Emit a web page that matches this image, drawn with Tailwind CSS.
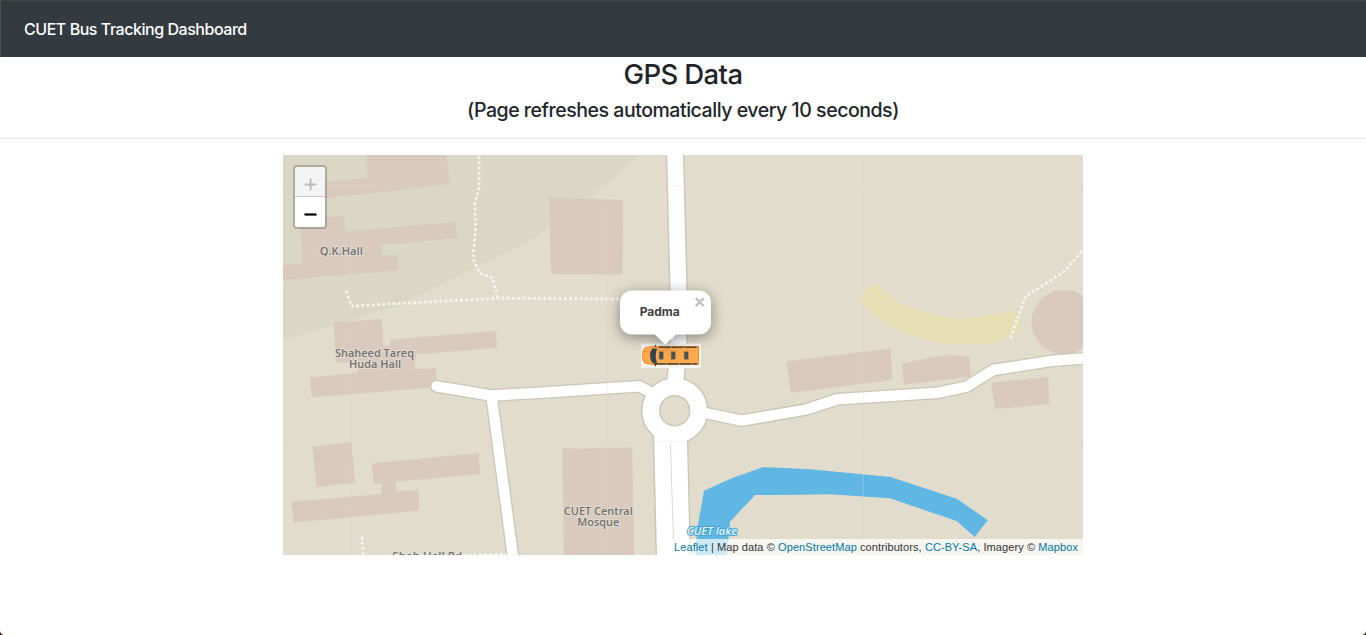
<!DOCTYPE html>
<html lang="en">
<head>
<meta charset="utf-8">
<title>CUET Bus Tracking Dashboard</title>
<script src="https://cdn.jsdelivr.net/npm/@tailwindcss/browser@4"></script>
</head>
<body class="relative h-[635px] overflow-hidden bg-white font-['Inter',sans-serif] text-[#212529]">
<nav class="flex h-[57px] items-center border-t border-l border-t-[#454545] border-l-[#4b5256] bg-[#333a40] pl-[23px]">
  <a class="text-base font-[450] tracking-[-0.46px] whitespace-nowrap text-white" href="#">CUET Bus Tracking Dashboard</a>
</nav>
<header class="flex flex-col items-center border-b border-[#e5e5e5] pb-4">
  <h2 class="h-[34px] text-[27.5px] leading-[34px] font-medium tracking-[-0.6px] whitespace-nowrap">GPS Data</h2>
  <h5 class="mt-[7px] h-6 text-[19.5px] leading-6 font-medium tracking-[-0.46px] whitespace-nowrap">(Page refreshes automatically every 10 seconds)</h5>
</header>
<main class="relative mx-auto mt-4 h-[400px] w-[800px] overflow-hidden bg-[#e1dccb]">
  <svg class="block h-[400px] w-[800px]" viewBox="283 155 800 400">
    <path fill="#dad8c4" d="M283 155H640L618 175L590 197L543 231L528 242L476 267L400 305L333 326L283 340Z"/>
    <g fill="#dacabd" stroke="#d5c5b8" stroke-width=".4">
      <path d="M367 154H446L449 184L326 198L300 200V184L326 182L368 178Z"/>
      <path d="M300 218L343.700 216.300L345 232L455.700 222.300L457 237.500L380.700 245L381.700 256L396.700 255L398 269.700L282 280V265.300L303.300 263.700Z"/>
      <path d="M334 323L381.700 319.300L383.300 346.300L391 345.700L390.700 340L495.700 331.300L496.700 347.500L415.700 354L414 369.300L435.700 368.300L437 387L312 397L310.300 377.700L358 373.300V361L337 362.700Z"/>
      <path d="M312.700 447.300L351 442.300L354.700 482.300L317 486.700Z"/>
      <path d="M372.300 463.700L478.300 453.300L480 473.700L395.700 481.300L396 491.700L417.700 490L419 510.300L294 522.300L291.700 502.300L382 494.300V483.300H374Z"/>
      <path d="M549.700 198L623 200.300L622 274.300L551.300 273.700Z"/>
      <path d="M562.700 449L631.700 448L634 556H564Z"/>
      <path d="M787 361.500L890.300 349L892 379.700L791 392.500Z"/>
      <path d="M902.700 363.700L931.700 357.700L950 355L969 357L970 376.300L904.300 384.300Z"/>
      <path d="M991.700 383L1047.700 377.300L1049 403.700L995.300 408.700Z"/>
      <circle cx="1063.700" cy="322" r="31.800"/>
    </g>
    <path fill="#e7deb4" d="M874 282.700L898.300 302.700L926.700 313.300L958.300 319.300L1017.300 310.700L1021.300 330L995 342.700L961.700 344.700L930 341L903.300 332.700L878.300 318.300L858 299.300Z"/>
    <path fill="#60b7e3" d="M704 490.700L731.700 478.300L762.700 467.300L780 467.700L810 469.300L890.700 477L957.300 499L987.700 520.300L974.700 537L956.700 521L890 498.300L830 494.300L780 495H755L730 521.700L726.700 556H695.700L696.700 531.700Z"/>
    <!-- footpaths -->
    <g fill="none" stroke="#f5f3ec" stroke-width="3.300" stroke-linecap="round" stroke-dasharray="0 5.200">
      <path d="M479 157.500V188L474.700 203.300L475.700 226.700L473 258.300L479.700 273.300L492.300 277.700L498 297.700"/>
      <path d="M346.700 292.300L351.300 306L498 298.200L620 299"/>
      <path d="M1011 336.700L1025.300 296.700L1063.300 272.300L1083 250"/>
      <path d="M362 538L363.500 556"/>
      <path d="M464.700 555L508 554"/>
    </g>
    <!-- road casing -->
    <g fill="none" stroke="#cbc6b5" stroke-linejoin="round">
      <g stroke-width="13" stroke-linecap="round">
        <path d="M436.500 386.300L491.300 395.500L540 392.700L639.300 386.300L652 393"/>
        <path d="M491.500 396L513 557"/>
        <path d="M703 412.500L741.700 420.700L780 414L806 409.500L837.700 399.300L938.300 392.700L966.700 386.700L993.300 370L1053.300 360.700L1090 358"/>
      </g>
      <path stroke-width="18.600" d="M675 150L678.500 290L678.500 345L675.500 380V390"/>
      <circle cx="674.700" cy="410.700" r="24" stroke-width="19.600"/>
    </g>
    <path fill="#cbc6b5" d="M652.500 430L655.500 556H691L688 430Z"/>
    <!-- road surface -->
    <g fill="none" stroke="#fff" stroke-linejoin="round">
      <g stroke-width="10.400" stroke-linecap="round">
        <path d="M436.500 386.300L491.300 395.500L540 392.700L639.300 386.300L652 393"/>
        <path d="M491.500 396L513 557"/>
        <path d="M703 412.500L741.700 420.700L780 414L806 409.500L837.700 399.300L938.300 392.700L966.700 386.700L993.300 370L1053.300 360.700L1090 358"/>
      </g>
      <path stroke-width="15.800" d="M675 150L678.500 290L678.500 345L675.500 380V390"/>
      <circle cx="674.700" cy="410.700" r="24" stroke-width="16.600"/>
    </g>
    <path fill="#fff" d="M654 430L657 556H689.700L686.700 430Z"/>
    <path stroke="#dedbd0" d="M670.300 443L674 555"/>
    <!-- tile seams -->
    <path stroke="#d6dccf" stroke-opacity=".3" d="M351.500 155V555M607.500 155V555M863.500 155V555M283 185.500H1083M283 441.500H1083"/>
    <g class="font-['Open_Sans','Noto_Sans',sans-serif]" font-size="11" font-weight="550" fill="#6f7173" stroke="#e6e0d6" stroke-opacity=".75" stroke-width="2" stroke-linejoin="round" paint-order="stroke" text-anchor="middle">
      <text x="341.300" y="255" textLength="43" lengthAdjust="spacingAndGlyphs">Q.K.Hall</text>
      <text x="374.500" y="356.600" textLength="79" lengthAdjust="spacingAndGlyphs">Shaheed Tareq</text>
      <text x="375" y="368" textLength="52" lengthAdjust="spacingAndGlyphs">Huda Hall</text>
      <text x="598.300" y="514.600" textLength="69" lengthAdjust="spacingAndGlyphs">CUET Central</text>
      <text x="598.300" y="525.600" textLength="42" lengthAdjust="spacingAndGlyphs">Mosque</text>
      <text x="427.300" y="559.500" textLength="70" lengthAdjust="spacingAndGlyphs">Shah Hall Rd</text>
      <text x="712" y="535" textLength="50" lengthAdjust="spacingAndGlyphs" font-style="italic" fill="#e6f4fb" stroke="#43a5d8" stroke-opacity="1">CUET lake</text>
    </g>
  </svg>

  <!-- zoom control -->
  <div class="absolute top-[10px] left-[10px] w-[34px] rounded-[4px] border-2 border-black/20 bg-clip-padding">
    <div class="flex h-[30px] items-center justify-center rounded-t-[2px] border-b border-[#ccc] bg-[#f4f4f4] pt-[5px]"><svg class="h-[13px] w-[13px]" viewBox="0 0 13 13"><path stroke="#bbb" stroke-width="2" d="M0.500 6.500H12.500M6.500 0.500V12.500"/></svg></div>
    <div class="flex h-[30px] items-center justify-center rounded-b-[2px] bg-white pt-[4px]"><svg class="h-[3px] w-[13px]" viewBox="0 0 13 3"><path stroke="#000" stroke-width="2.200" d="M0.500 1.500H12.500"/></svg></div>
  </div>

  <!-- bus marker -->
  <svg class="absolute top-[188px] left-[358px] h-[25px] w-[60px]" viewBox="0 0 60 25">
    <path fill="#f5f4f2" d="M0 0.500H60V25H0Z"/>
    <path fill="#ffa94d" stroke="#f58a27" stroke-width="1" d="M5 4.500L13 3.500H57.500V21.500H13L5 20.500Q1.500 19.500 1.500 12.500T5 4.500Z"/>
    <path stroke="#f58a27" stroke-width=".7" d="M3 8.500H7M3 17H7" fill="none"/>
    <path fill="#36454f" d="M11.500 5.500H16Q13.500 12.500 16 20H11.500Q9 17 9 12.500T11.500 5.500Z"/>
    <path fill="#44545c" stroke="#d98e3d" stroke-width=".6" d="M18 8.500H22.500V16.500H18ZM30 8.500H34.500V16.500H30ZM43 8.500H47.500V16.500H43Z"/>
    <path stroke="#5a5138" stroke-width="1.600" stroke-dasharray="12 .8" d="M18 4.200H56M13 20.900H56"/>
    <path stroke="#222" stroke-width=".8" d="M14.500 1.800V4M14.500 21V23.300"/>
  </svg>

  <!-- popup -->
  <svg class="absolute top-[120px] left-[317px] h-[85px] w-[131px] overflow-visible" viewBox="600 275 131 85">
    <path class="drop-shadow-[0_3px_7px_rgba(0,0,0,0.4)]" fill="#fff" d="M632 290.500H699A12 12 0 0 1 711 302.500V322.500A12 12 0 0 1 699 334.500H676L665.300 344.500L654.700 334.500H632A12 12 0 0 1 620 322.500V302.500A12 12 0 0 1 632 290.500Z"/>
    <path stroke="#c3c3c3" stroke-width="2.400" d="M695.700 298.200L703.700 306.200M703.700 298.200L695.700 306.200"/>
    <text class="font-['Inter',sans-serif]" x="639.700" y="316.200" font-size="12" font-weight="700" fill="#404040" textLength="40" lengthAdjust="spacingAndGlyphs">Padma</text>
  </svg>

  <!-- attribution -->
  <div class="absolute right-0 bottom-0 h-4 bg-white/70 px-[5px] font-['Liberation_Sans',sans-serif] text-[11px] leading-[17px] tracking-[0.09px] whitespace-nowrap text-[#333]"><a class="text-[#0078a8]" href="#">Leaflet</a> | Map data © <a class="text-[#0078a8]" href="#">OpenStreetMap</a> contributors, <a class="text-[#0078a8]" href="#">CC-BY-SA</a>, Imagery © <a class="text-[#0078a8]" href="#">Mapbox</a></div>
</main>
<!-- window corners -->
<svg class="absolute bottom-0 left-0 h-[4px] w-[4px]" viewBox="0 0 4 4"><path fill="#3d211a" d="M0 0Q0.500 3.500 4 4H0Z"/></svg>
<svg class="absolute right-0 bottom-0 h-[4px] w-[4px]" viewBox="0 0 4 4"><path fill="#3d211a" d="M4 0Q3.500 3.500 0 4H4Z"/></svg>
</body>
</html>
